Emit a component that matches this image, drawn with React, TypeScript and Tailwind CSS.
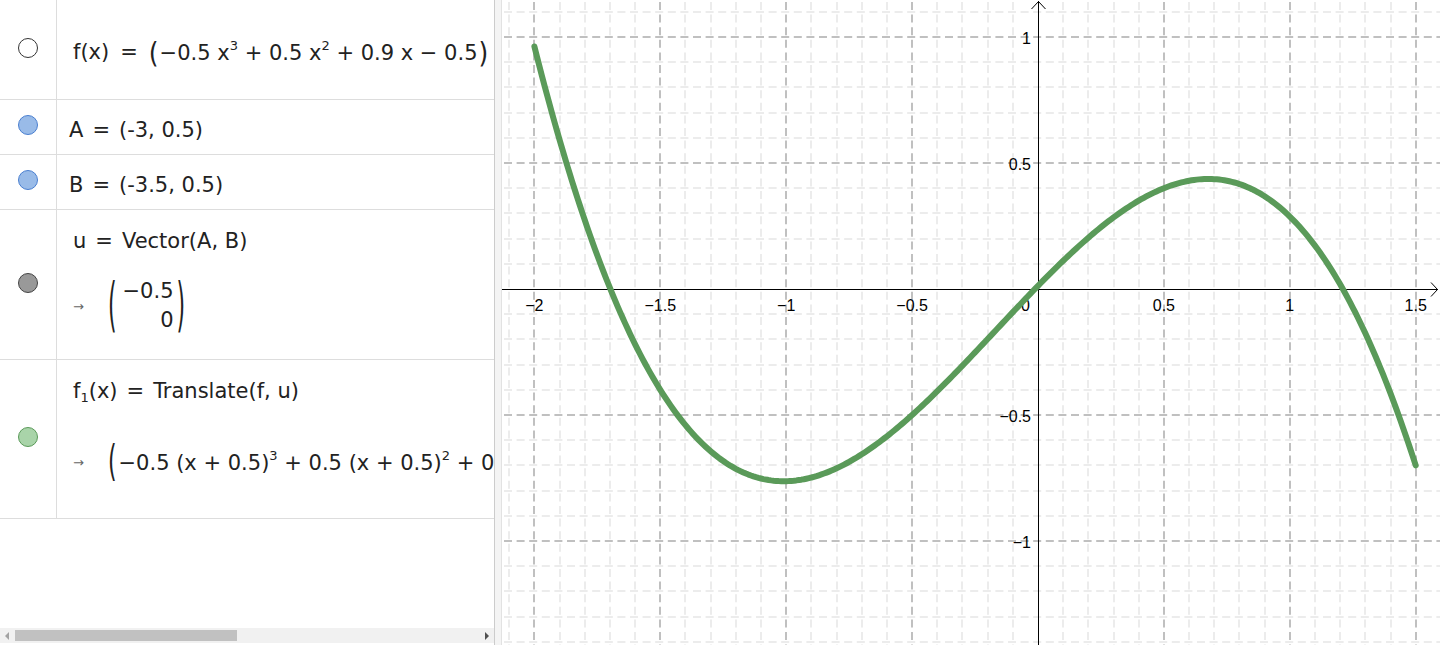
import React from 'react';

// graphics view geometry (local px)
const W = 938;
const H = 645;
const OX = 536;
const OY = 289;
const SX = 251.8;
const SY = 252;

const f1 = (x: number) => {
  const t = x + 0.5;
  return -0.5 * t * t * t + 0.5 * t * t + 0.9 * t - 0.5;
};

const curvePath = () => {
  const pts: string[] = [];
  for (let i = 0; i <= 350; i++) {
    const x = -2 + i * 0.01;
    pts.push(`${i ? 'L' : 'M'}${(OX + x * SX).toFixed(2)} ${(OY - f1(x) * SY).toFixed(2)}`);
  }
  return pts.join(' ');
};

const range = (a: number, b: number) => {
  const out: number[] = [];
  for (let k = a; k <= b; k++) out.push(k);
  return out;
};

const Graphics: React.FC = () => {
  const kx = range(Math.ceil(-OX / SX / 0.1), Math.floor((W - OX) / SX / 0.1));
  const ky = range(Math.ceil(-(H - OY) / SY / 0.1), Math.floor(OY / SY / 0.1));
  const xLabels = [
    [-2, '−2'],
    [-1.5, '−1.5'],
    [-1, '−1'],
    [-0.5, '−0.5'],
    [0.5, '0.5'],
    [1, '1'],
    [1.5, '1.5'],
  ] as const;
  const yLabels = [
    [1, '1'],
    [0.5, '0.5'],
    [-0.5, '−0.5'],
    [-1, '−1'],
  ] as const;

  return (
    <svg width={W} height={H} viewBox={`0 0 ${W} ${H}`} className="block">
      <rect width={W} height={H} fill="#ffffff" />
      {/* minor grid */}
      {kx.filter((k) => k % 5 !== 0).map((k) => {
        const x = Math.round(OX + k * 0.1 * SX);
        return <line key={`mx${k}`} x1={x} y1={0} x2={x} y2={H} stroke="#ececec" strokeWidth={2} strokeDasharray="8 4.6" strokeDashoffset={-2} />;
      })}
      {ky.filter((k) => k % 5 !== 0).map((k) => {
        const y = Math.round(OY - k * 0.1 * SY);
        return <line key={`my${k}`} x1={0} y1={y} x2={W} y2={y} stroke="#ececec" strokeWidth={2} strokeDasharray="8 4.6" strokeDashoffset={-2} />;
      })}
      {/* major grid */}
      {kx.filter((k) => k % 5 === 0 && k !== 0).map((k) => {
        const x = Math.round(OX + k * 0.1 * SX);
        return <line key={`Mx${k}`} x1={x} y1={0} x2={x} y2={H} stroke="#c0c0c0" strokeWidth={2} strokeDasharray="8 4.6" strokeDashoffset={-2} />;
      })}
      {ky.filter((k) => k % 5 === 0 && k !== 0).map((k) => {
        const y = Math.round(OY - k * 0.1 * SY);
        return <line key={`My${k}`} x1={0} y1={y} x2={W} y2={y} stroke="#c0c0c0" strokeWidth={2} strokeDasharray="8 4.6" strokeDashoffset={-2} />;
      })}
      {/* axes */}
      <line x1={0} y1={OY + 0.5} x2={W - 2} y2={OY + 0.5} stroke="#000" strokeWidth={1} />
      <line x1={OX + 0.5} y1={1} x2={OX + 0.5} y2={H} stroke="#000" strokeWidth={1} />
      <polyline points={`${W - 9},${OY - 6.5} ${W - 2.5},${OY + 0.5} ${W - 9},${OY + 7.5}`} fill="none" stroke="#000" strokeWidth={1} />
      <polyline points={`${OX - 6.5},9 ${OX + 0.5},1.5 ${OX + 7.5},9`} fill="none" stroke="#000" strokeWidth={1} />
      {/* labels */}
      <g fontFamily="'Liberation Sans', Arial, sans-serif" fontSize={16} fill="#000">
        {xLabels.map(([v, t]) => (
          <text key={`xl${v}`} x={OX + v * SX} y={311} textAnchor="middle">
            {t}
          </text>
        ))}
        <text x={OX - 8} y={311} textAnchor="end">
          0
        </text>
        {yLabels.map(([v, t]) => (
          <text key={`yl${v}`} x={OX - 7} y={OY - v * SY + 7} textAnchor="end">
            {t}
          </text>
        ))}
      </g>
      {/* translated function f1 */}
      <path d={curvePath()} fill="none" stroke="#5a9a59" strokeWidth={6} strokeLinecap="round" strokeLinejoin="round" />
    </svg>
  );
};

const Sup: React.FC<{ children: React.ReactNode }> = ({ children }) => (
  <span className="text-[13px] align-[10px]">{children}</span>
);

const Arrow: React.FC = () => (
  <span className="text-[13px] text-[#666666] mr-[24px] leading-none">→</span>
);

const Eq: React.FC = () => <span className="mx-[9px]">=</span>;

export default function App() {
  return (
    <div
      className="flex w-[1440px] h-[645px] overflow-hidden bg-white text-[#222222] text-[21px]"
      style={{ fontFamily: "'DejaVu Sans', 'Noto Sans', sans-serif" }}
    >
      {/* Algebra view */}
      <div className="w-[494px] h-full flex flex-col shrink-0">
        <div className="flex-1 overflow-hidden">
          {/* f(x) */}
          <div className="flex h-[100px] border-b border-[#dddddd]">
            <div className="w-[57px] shrink-0 border-r border-[#dddddd] flex justify-center pt-[38px]">
              <div className="w-[20px] h-[20px] rounded-full bg-white border border-[#333333]" />
            </div>
            <div className="pl-[16px] pt-[40px] flex items-center h-[66px] whitespace-nowrap">
              <span>f(x)</span>
              <span className="mx-[11px]">=</span>
              <span className="inline-block text-[25px] leading-none scale-y-[1.15] mr-[1px]">(</span>
              <span>
                −0.5 x<Sup>3</Sup> + 0.5 x<Sup>2</Sup> + 0.9 x − 0.5
              </span>
              <span className="inline-block text-[25px] leading-none scale-y-[1.15] ml-[1px]">)</span>
            </div>
          </div>
          {/* A */}
          <div className="flex h-[55px] border-b border-[#dddddd]">
            <div className="w-[57px] shrink-0 border-r border-[#dddddd] flex justify-center pt-[15px]">
              <div className="w-[20px] h-[20px] rounded-full bg-[#99bbe8] border border-[#4a7fd0]" />
            </div>
            <div className="pl-[12px] pt-[16px] leading-[28px] whitespace-nowrap">
              A<Eq />(-3, 0.5)
            </div>
          </div>
          {/* B */}
          <div className="flex h-[55px] border-b border-[#dddddd]">
            <div className="w-[57px] shrink-0 border-r border-[#dddddd] flex justify-center pt-[15px]">
              <div className="w-[20px] h-[20px] rounded-full bg-[#99bbe8] border border-[#4a7fd0]" />
            </div>
            <div className="pl-[12px] pt-[16px] leading-[28px] whitespace-nowrap">
              B<Eq />(-3.5, 0.5)
            </div>
          </div>
          {/* u */}
          <div className="flex h-[150px] border-b border-[#dddddd]">
            <div className="w-[57px] shrink-0 border-r border-[#dddddd] flex justify-center pt-[63px]">
              <div className="w-[20px] h-[20px] rounded-full bg-[#999999] border border-[#444444]" />
            </div>
            <div className="pl-[16px] pt-[17px] whitespace-nowrap">
              <div className="leading-[28px]">
                u<Eq />Vector(A, B)
              </div>
              <div className="flex items-center mt-[22px]">
                <Arrow />
                <span className="inline-block text-[22px] leading-none scale-y-[2.7]">(</span>
                <div className="flex flex-col items-end leading-[29px] ml-[6px] mr-[3px]">
                  <span>−0.5</span>
                  <span>0</span>
                </div>
                <span className="inline-block text-[22px] leading-none scale-y-[2.7]">)</span>
              </div>
            </div>
          </div>
          {/* f1 */}
          <div className="flex h-[159px] border-b border-[#dddddd]">
            <div className="w-[57px] shrink-0 border-r border-[#dddddd] flex justify-center pt-[67px]">
              <div className="w-[20px] h-[20px] rounded-full bg-[#a9d4a9] border border-[#5a9a59]" />
            </div>
            <div className="pl-[16px] pt-[17px] whitespace-nowrap overflow-hidden">
              <div className="leading-[28px]">
                f<span className="text-[13px] align-[-4px]">1</span>(x)<Eq />Translate(f, u)
              </div>
              <div className="flex items-center mt-[34px]">
                <Arrow />
                <span className="inline-block text-[22px] leading-none scale-y-[1.9] mr-[2px]">(</span>
                <span>
                  −0.5 (x + 0.5)<Sup>3</Sup> + 0.5 (x + 0.5)<Sup>2</Sup> + 0
                </span>
              </div>
            </div>
          </div>
        </div>
        {/* horizontal scrollbar */}
        <div className="h-[15px] mb-[2px] bg-[#f1f1f1] flex items-center">
          <svg width="6" height="8" viewBox="0 0 6 8" className="ml-[4px]">
            <polygon points="5,0 5,8 1,4" fill="#a3a3a3" />
          </svg>
          <div className="ml-[5px] w-[222px] h-[11px] bg-[#c1c1c1]" />
          <div className="flex-1" />
          <svg width="6" height="8" viewBox="0 0 6 8" className="mr-[4px]">
            <polygon points="1,0 1,8 5,4" fill="#505050" />
          </svg>
        </div>
      </div>
      {/* splitter */}
      <div className="w-[8px] h-full shrink-0 bg-[#f4f4f4] border-l border-[#cccccc] border-r border-r-[#e2e2e2]" />
      {/* Graphics view */}
      <div className="flex-1 h-full overflow-hidden">
        <Graphics />
      </div>
    </div>
  );
}
